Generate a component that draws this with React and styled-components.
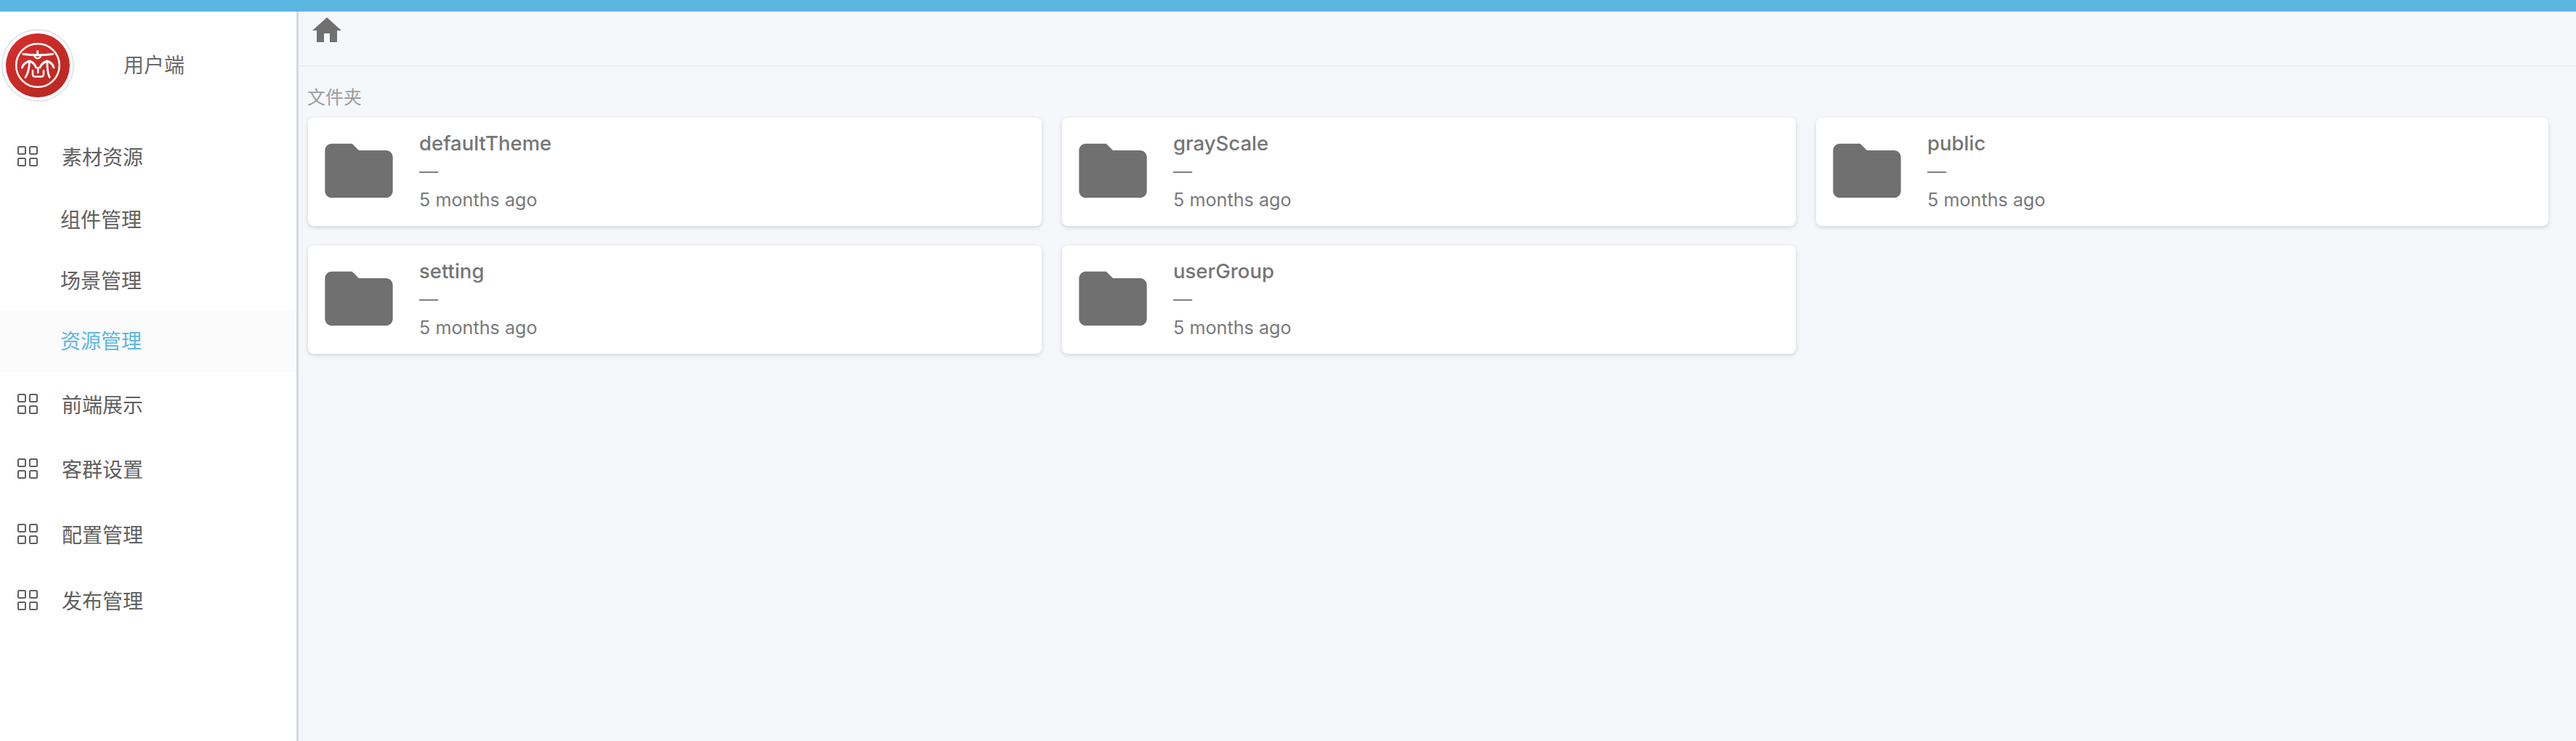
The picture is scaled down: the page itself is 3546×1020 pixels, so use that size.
import React from "react";
import styled, { createGlobalStyle } from "styled-components";

const Global = createGlobalStyle`
  html, body { margin: 0; padding: 0; height: 100%; }
  body { font-family: Inter, "Noto Sans CJK SC", sans-serif; background: #f5f7fb; overflow: hidden; }
  #root { height: 100%; }
`;
const CJK = `"Noto Sans CJK SC", sans-serif`;

const Page = styled.div`
  width: 3546px; height: 1020px; display: flex; flex-direction: column; background: #f5f7fb;
`;
const TopBar = styled.div`height: 16px; flex: none; background: #5cb6e2;`;
const Body = styled.div`flex: 1; display: flex; min-height: 0;`;
const Sidebar = styled.aside`
  width: 408px; flex: none; background: #fff; border-right: 3px solid #d6d8dc; display: flex; flex-direction: column;
`;
const Brand = styled.div`height: 154px; flex: none; display: flex; align-items: flex-start; padding: 24px 0 0 2px; box-sizing: border-box;`;
const BrandName = styled.div`
  font-family: ${CJK}; font-size: 28px; line-height: 96px; color: #6a6a6a; margin-left: 68px;
`;
const MenuHead = styled.div`
  height: ${p => p.$h || 90}px; flex: none; display: flex; align-items: center; padding-left: 24px; gap: 33px;
  font-family: ${CJK}; font-size: 28px; color: #606060;
`;
const SubItem = styled.div`
  height: 84px; flex: none; box-sizing: border-box; display: flex; align-items: center; padding: 0 0 ${p => (p.$active ? 5 : 2)}px 83px;
  font-family: ${CJK}; font-size: 28px;
  color: ${p => (p.$active ? "#5cb6e2" : "#606060")};
  background: ${p => (p.$active ? "#fbfbfc" : "transparent")};
`;
const Main = styled.main`flex: 1; min-width: 0; display: flex; flex-direction: column;`;
const Crumbs = styled.div`
  height: 76px; flex: none; box-sizing: border-box; padding: 2px 0 0 15px; border-bottom: 2px solid #ebedf1;
`;
const Content = styled.div`padding: 22px 38px 0 13px;`;
const SectionTitle = styled.div`
  font-family: ${CJK}; font-size: 25px; line-height: 36px; color: #9c9c9c; margin: 0 0 12px -1px;
`;
const Grid = styled.div`display: grid; grid-template-columns: 1010px 1010px 1008px; column-gap: 28px; row-gap: 27px;`;
const Card = styled.div`
  height: 149px; background: #fff; border-radius: 8px; box-shadow: 0 2px 6px rgba(0,0,0,.15);
  display: flex; align-items: flex-start; padding: 17px 0 0 14px; box-sizing: border-box;
`;
const Info = styled.div`margin: -1px 0 0 27px; display: flex; flex-direction: column; color: #707070;`;
const Name = styled.div`font-size: 27.5px; font-weight: 500; line-height: 38px; color: #757575;`;
const Dash = styled.div`font-size: 26px; line-height: 40px; color: #808080;`;
const Time = styled.div`font-size: 25.2px; line-height: 38px; color: #7a7a7a;`;

const GridIcon = () => (
  <svg width="28" height="28" viewBox="0 0 28 28" fill="none" stroke="#5f5f5f" strokeWidth="2" style={{ flex: "none" }}>
    <rect x="1" y="1" width="10" height="10" rx="1.5" />
    <rect x="17" y="1" width="10" height="10" rx="1.5" />
    <rect x="1" y="17" width="10" height="10" rx="1.5" />
    <rect x="17" y="17" width="10" height="10" rx="1.5" />
  </svg>
);
const HomeIcon = () => (
  <svg width="48" height="48" viewBox="0 0 24 24" fill="#707070" style={{ display: "block" }}>
    <path d="M10 20v-6h4v6h5v-8h3L12 3 2 12h3v8z" />
  </svg>
);
const FolderIcon = () => (
  <svg width="112" height="112" viewBox="0 0 24 24" fill="#707070" style={{ display: "block", flex: "none" }}>
    <path d="M10 4H4c-1.1 0-2 .9-2 2v12c0 1.1.9 2 2 2h16c1.1 0 2-.9 2-2V8c0-1.1-.9-2-2-2h-8l-2-2z" />
  </svg>
);
const Logo = () => (
  <svg width="100" height="100" viewBox="0 0 100 100" style={{ flex: "none" }}>
    <defs>
      <linearGradient id="lg" x1="0" y1="0" x2="1" y2="1">
        <stop offset="0" stopColor="#d62f30" />
        <stop offset="1" stopColor="#b8271f" />
      </linearGradient>
    </defs>
    <circle cx="50" cy="50" r="49" fill="#fff" stroke="#e2e5ea" strokeWidth="2" />
    <circle cx="50" cy="50" r="44" fill="url(#lg)" />
    <circle cx="50" cy="50" r="29.8" fill="none" stroke="#fff" strokeWidth="2.6" />
    <g fill="none" stroke="#fff" strokeLinecap="round" strokeLinejoin="round">
      <path d="M30 34.5 Q50 37 70.5 34.5" strokeWidth="3" />
      <path d="M49.7 30.5v4" strokeWidth="3" />
      <path d="M45.5 37.5 Q49.7 43.5 54 37.5" strokeWidth="2.4" />
      <path d="M28.5 53 Q30 47 38.7 44 Q46 47 47.5 53" strokeWidth="3" />
      <path d="M38.5 46 Q38 59 33 66.5" strokeWidth="2.8" />
      <path d="M53 53 Q55 47 63 44 Q70.5 47 72 53" strokeWidth="3" />
      <path d="M63 46 Q63 60 66.3 66.5" strokeWidth="2.8" />
      <path d="M43 57 V62 Q43 65.5 46 65.5 H55 Q58 65.5 58 62 V57" strokeWidth="2.6" />
      <path d="M50.3 53 V60" strokeWidth="2.6" />
    </g>
  </svg>
);

const folders = ["defaultTheme", "grayScale", "public", "setting", "userGroup"];

export default function App() {
  return (
    <Page>
      <Global />
      <TopBar />
      <Body>
        <Sidebar>
          <Brand>
            <Logo />
            <BrandName>用户端</BrandName>
          </Brand>
          <MenuHead><GridIcon />素材资源</MenuHead>
          <SubItem>组件管理</SubItem>
          <SubItem>场景管理</SubItem>
          <SubItem $active>资源管理</SubItem>
          <MenuHead $h={88}><GridIcon />前端展示</MenuHead>
          <MenuHead><GridIcon />客群设置</MenuHead>
          <MenuHead><GridIcon />配置管理</MenuHead>
          <MenuHead $h={92}><GridIcon />发布管理</MenuHead>
        </Sidebar>
        <Main>
          <Crumbs><HomeIcon /></Crumbs>
          <Content>
            <SectionTitle>文件夹</SectionTitle>
            <Grid>
              {folders.map(name => (
                <Card key={name}>
                  <FolderIcon />
                  <Info>
                    <Name>{name}</Name>
                    <Dash>—</Dash>
                    <Time>5 months ago</Time>
                  </Info>
                </Card>
              ))}
            </Grid>
          </Content>
        </Main>
      </Body>
    </Page>
  );
}
